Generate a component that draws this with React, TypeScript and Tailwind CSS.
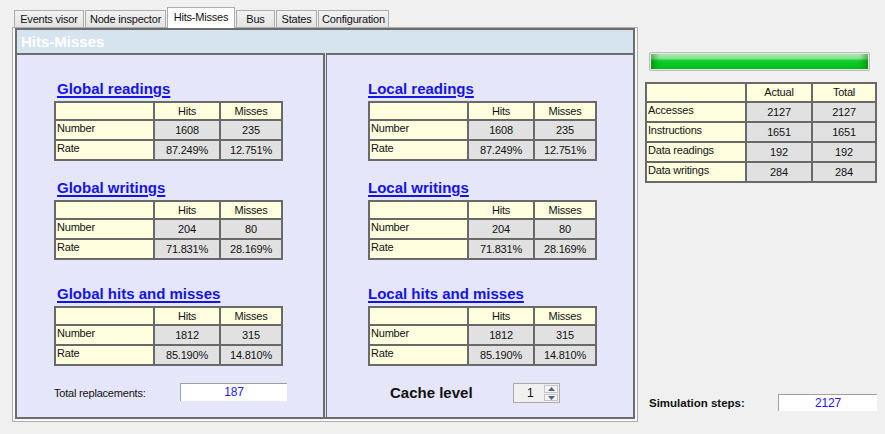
const tabs = [
  { name: "Events visor", w: "w-[70px]" },
  { name: "Node inspector", w: "w-[81px]" },
  { name: "Hits-Misses", w: "w-[68px]", active: true },
  { name: "Bus", w: "w-[39px]" },
  { name: "States", w: "w-[41px]" },
  { name: "Configuration", w: "w-[71px]" },
];

type Row = [string, string, string];

function StatTable({ head, rows, big }: { head: [string, string]; rows: Row[]; big?: boolean }) {
  return (
    <div
      className={
        big
          ? "grid grid-cols-[98px_64px_62px] grid-rows-[17px_18px_18px_18px_18px] gap-[2px] p-[2px] bg-[#696969] w-fit"
          : "grid grid-cols-[97px_64px_60px] grid-rows-[16px_18px_18px] gap-[2px] p-[2px] bg-[#696969] w-fit"
      }
    >
      <div className="bg-[#ffffe0]" />
      <div className="bg-[#ffffe0] flex items-center justify-center">{head[0]}</div>
      <div className="bg-[#ffffe0] flex items-center justify-center">{head[1]}</div>
      {rows.map((r) => (
        <>
          <div key={r[0]} className="bg-[#ffffe0] pl-[1px] leading-[13px] pt-[1px]">
            {r[0]}
          </div>
          <div className="bg-[#e1e1e1] flex items-center justify-center pt-[1px]">{r[1]}</div>
          <div className="bg-[#e1e1e1] flex items-center justify-center pt-[1px]">{r[2]}</div>
        </>
      ))}
    </div>
  );
}

function Title({ text, left }: { text: string; left?: boolean }) {
  return (
    <div
      className={
        "w-fit h-[18px] leading-[18px] text-[15px] font-bold tracking-normal text-[#1414e6] underline decoration-[2px] underline-offset-[2px] " +
        (left ? "ml-[3px]" : "")
      }
    >
      {text}
    </div>
  );
}

function Section({ left, prefix }: { left?: boolean; prefix: string }) {
  return (
    <>
      <Title left={left} text={`${prefix} readings`} />
      <div className="mt-[3px]">
        <StatTable head={["Hits", "Misses"]} rows={[["Number", "1608", "235"], ["Rate", "87.249%", "12.751%"]]} />
      </div>
      <div className="mt-[18px]">
        <Title left={left} text={`${prefix} writings`} />
      </div>
      <div className="mt-[3px]">
        <StatTable head={["Hits", "Misses"]} rows={[["Number", "204", "80"], ["Rate", "71.831%", "28.169%"]]} />
      </div>
      <div className="mt-[25px]">
        <Title left={left} text={`${prefix} hits and misses`} />
      </div>
      <div className="mt-[3px]">
        <StatTable head={["Hits", "Misses"]} rows={[["Number", "1812", "315"], ["Rate", "85.190%", "14.810%"]]} />
      </div>
    </>
  );
}

function Spinner() {
  return (
    <div className="w-[47px] h-[20px] border border-[#a9a9a9] bg-[#f0f0f0] flex">
      <div className="flex-1 flex items-center pl-[13px] text-[12px]">1</div>
      <div className="w-[14px] mr-[1px] my-[1px] flex flex-col gap-[1px]">
        <div className="flex-1 border border-[#c4c4c4] bg-[#f4f4f4] flex items-center justify-center">
          <svg width="7" height="4" viewBox="0 0 7 4">
            <path d="M0 4 L3.5 0 L7 4 Z" fill="#4f6286" />
          </svg>
        </div>
        <div className="flex-1 border border-[#c4c4c4] bg-[#f4f4f4] flex items-center justify-center">
          <svg width="7" height="4" viewBox="0 0 7 4">
            <path d="M0 0 L7 0 L3.5 4 Z" fill="#4f6286" />
          </svg>
        </div>
      </div>
    </div>
  );
}

export default function App() {
  return (
    <div className="w-[885px] h-[434px] bg-[#f0f0f0] flex font-['Liberation_Sans',Arial,sans-serif] text-[11px] text-[#111] tracking-[-0.2px] overflow-hidden">
      <div className="ml-[12px] pt-[7px] w-[626px] flex flex-col">
        <div className="h-[20px] flex items-end pl-[2px] gap-[1px]">
          {tabs.map((t) =>
            t.active ? (
              <div
                key={t.name}
                className={`${t.w} h-[21px] -mb-[1px] relative z-10 bg-white border border-b-0 border-[#acacac] flex justify-center pt-[2px] leading-[14px]`}
              >
                {t.name}
              </div>
            ) : (
              <div
                key={t.name}
                className={`${t.w} h-[17px] bg-linear-to-b from-[#f2f2f2] to-[#e3e3e3] border border-b-0 border-[#acacac] flex justify-center pt-[1px] leading-[15px]`}
              >
                {t.name}
              </div>
            )
          )}
        </div>
        <div className="h-[395px] border border-[#adadad] bg-[#fafafa] px-[2px] pb-[2px]">
          <div className="h-full border-2 border-[#6d6d6d] flex flex-col bg-[#d6e4f0]">
            <div className="h-[23px] pl-[4px] text-white font-bold text-[15px] leading-[23px] tracking-normal">
              Hits-Misses
            </div>
            <div className="flex-1 flex gap-[1px]">
              <div className="w-[308px] bg-[#e6e6fa] border-t-2 border-r-2 border-[#6d6d6d] pt-[25px] pl-[37px] flex flex-col">
                <Section left prefix="Global" />
                <div className="mt-[16px] flex items-center">
                  <div className="w-[126px] pt-[3px]">Total replacements:</div>
                  <div className="w-[107px] h-[18px] bg-white border-t border-l border-[#a0a0a0] flex items-center justify-center text-[#2020f0] text-[12px]">
                    187
                  </div>
                </div>
              </div>
              <div className="flex-1 bg-[#e6e6fa] border-t-2 border-l border-[#6d6d6d] pt-[25px] pl-[41px] flex flex-col">
                <Section prefix="Local" />
                <div className="mt-[16px] ml-[22px] flex items-center">
                  <div className="w-[123px] font-bold text-[15px] tracking-normal">Cache level</div>
                  <Spinner />
                </div>
              </div>
            </div>
          </div>
        </div>
      </div>
      <div className="ml-[7px] w-[233px] flex flex-col">
        <div className="mt-[52px] ml-[4px] w-[221px] h-[19px] border border-[#bcbcbc] rounded-[2px] p-[1px] bg-[#e6e6e6]">
          <div className="w-full h-full bg-[linear-gradient(to_bottom,#bff2c0_0%,#7fe48a_30%,#10cc2a_45%,#00c41c_100%)] shadow-[inset_8px_0_6px_-4px_rgba(0,90,0,0.45),inset_-8px_0_6px_-4px_rgba(0,90,0,0.45)]" />
        </div>
        <div className="mt-[11px]">
          <StatTable
            big
            head={["Actual", "Total"]}
            rows={[
              ["Accesses", "2127", "2127"],
              ["Instructions", "1651", "1651"],
              ["Data readings", "192", "192"],
              ["Data writings", "284", "284"],
            ]}
          />
        </div>
        <div className="mt-auto mb-[22px] ml-[4px] flex items-center">
          <div className="w-[129px] font-bold text-[11.5px] tracking-normal pt-[1px]">Simulation steps:</div>
          <div className="w-[99px] h-[17px] bg-white border-t border-l border-[#a0a0a0] flex items-center justify-center text-[#2020f0] text-[12px]">
            2127
          </div>
        </div>
      </div>
    </div>
  );
}
